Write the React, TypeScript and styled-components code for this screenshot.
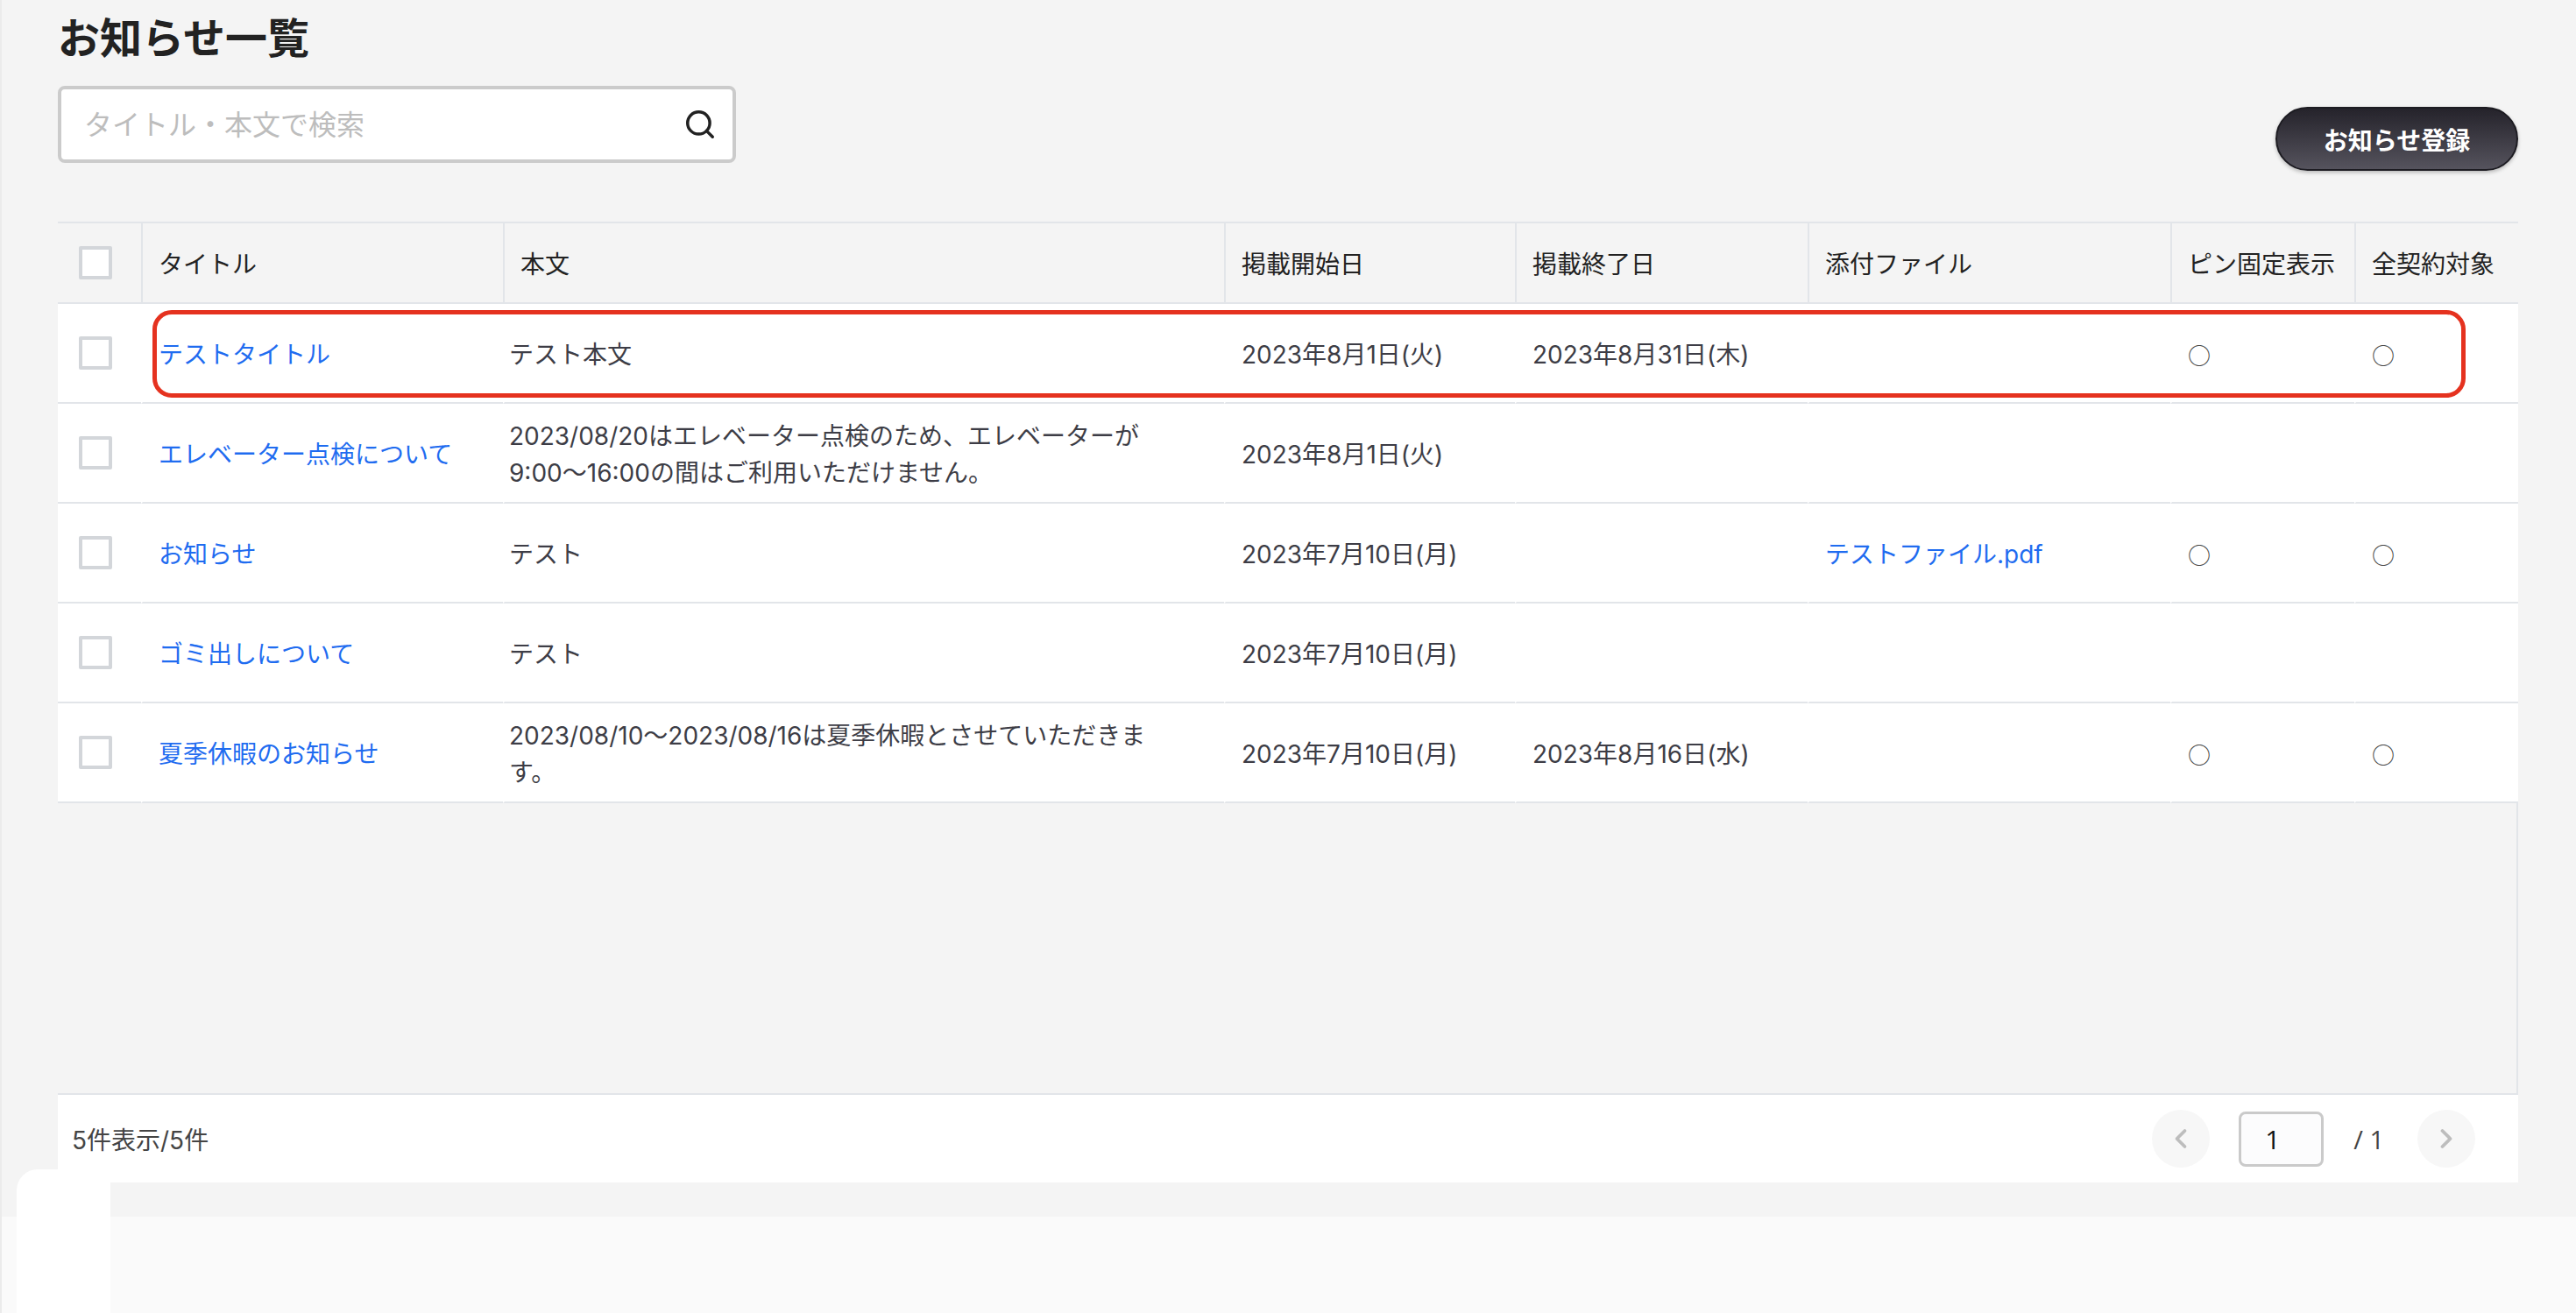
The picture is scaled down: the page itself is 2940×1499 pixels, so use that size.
import React from "react";
import styled, { createGlobalStyle } from "styled-components";
import { Search, ChevronLeft, ChevronRight } from "lucide-react";

const GlobalStyle = createGlobalStyle`
  html, body {
    margin: 0;
    padding: 0;
    background: #f4f4f4;
  }
  body {
    font-family: Inter, "Noto Sans CJK JP", sans-serif;
    color: #222;
  }
  * {
    box-sizing: border-box;
  }
`;

const StyledPage = styled.div`
  min-height: 100vh;
  display: flex;
  flex-direction: column;
  border-left: 2px solid #ebebeb;
`;

const StyledContent = styled.div`
  padding: 12px 66px 0 64px;
`;

const StyledTitle = styled.h1`
  margin: 0;
  font-size: 48px;
  line-height: 64px;
  font-weight: 700;
  color: #222;
`;

const StyledToolbar = styled.div`
  margin-top: 22px;
  display: flex;
  justify-content: space-between;
  align-items: flex-start;
`;

const StyledSearchBox = styled.div`
  width: 774px;
  height: 88px;
  background: #fff;
  border: 4px solid #cbcbcb;
  border-radius: 8px;
  display: flex;
  align-items: center;
  padding: 0 18px 0 24px;
`;

const StyledSearchInput = styled.input`
  flex: 1;
  border: none;
  outline: none;
  background: transparent;
  font-family: inherit;
  font-size: 32px;
  color: #222;

  &::placeholder {
    color: #bdbdbd;
  }
`;

const StyledRegisterButton = styled.button`
  margin-top: 24px;
  width: 277px;
  height: 73px;
  border-radius: 40px;
  border: 2px solid #1d1c22;
  background: linear-gradient(to bottom, #25232b, #55535d);
  box-shadow: 0 2px 4px rgba(0, 0, 0, 0.25);
  color: #fff;
  font-family: inherit;
  font-size: 28px;
  font-weight: 700;
`;

const StyledTableArea = styled.div`
  position: relative;
  margin-top: 58px;
  height: 997px;
  border-right: 2px solid #e2e5e9;
  border-bottom: 2px solid #e2e5e9;
`;

const StyledTable = styled.table`
  width: 100%;
  border-collapse: separate;
  border-spacing: 0;
  table-layout: fixed;
`;

const StyledHeadCell = styled.th`
  height: 94px;
  padding: 0 0 0 18px;
  text-align: left;
  font-size: 28px;
  font-weight: 400;
  color: #222;
  background: #f4f4f4;
  border-top: 2px solid #e2e5e9;
  border-bottom: 2px solid #e2e5e9;
  border-left: 2px solid #e2e5e9;

  &:first-child {
    border-left: none;
    padding: 0 0 0 24px;
  }
`;

const StyledCell = styled.td<{ $pad?: number }>`
  height: 114px;
  padding: 4px 18px 0 ${(p) => p.$pad ?? 18}px;
  background: #fff;
  font-size: 28px;
  line-height: 42px;
  color: #3d3d46;
  vertical-align: middle;
  border-bottom: 2px solid #e2e5e9;
  border-left: 2px solid #fff;
  white-space: pre-line;

  &:first-child {
    border-left: none;
    padding: 0 0 0 24px;
  }
`;

const StyledCheckbox = styled.span`
  display: block;
  width: 38px;
  height: 38px;
  background: #fff;
  border: 4px solid #d3d6da;
  border-radius: 2px;
`;

const StyledLink = styled.a`
  color: #1f6cf0;
  text-decoration: none;
`;

const StyledMark = styled.span`
  font-family: "Noto Sans CJK JP", sans-serif;
  font-size: 26px;
  color: #444;
`;

const StyledHighlight = styled.div`
  position: absolute;
  left: 108px;
  top: 101px;
  width: 2640px;
  height: 100px;
  border: 5px solid #e5321f;
  border-radius: 22px;
  pointer-events: none;
`;

const StyledFooter = styled.div`
  height: 100px;
  background: #fff;
  display: flex;
  align-items: center;
  justify-content: space-between;
  padding: 0 49px 0 16px;
`;

const StyledCount = styled.span`
  font-size: 28px;
  color: #444;
`;

const StyledPager = styled.div`
  display: flex;
  align-items: center;
`;

const StyledPageArrow = styled.button`
  width: 66px;
  height: 66px;
  border-radius: 50%;
  border: none;
  background: #f7f7f7;
  color: #bdbdbd;
  display: flex;
  align-items: center;
  justify-content: center;
  padding: 0;
`;

const StyledPageInput = styled.input`
  margin-left: 33px;
  width: 97px;
  height: 63px;
  border: 3px solid #cacaca;
  border-radius: 8px;
  background: #fcfcfd;
  padding: 0 0 0 27px;
  font-family: "Open Sans", sans-serif;
  font-size: 30px;
  color: #111;
  outline: none;
`;

const StyledPageTotal = styled.span`
  margin: 0 38px 0 34px;
  font-family: "Open Sans", sans-serif;
  font-size: 29px;
  color: #444;
`;

const StyledBottomBand = styled.div`
  margin-top: 39px;
  flex: 1;
  background: #fafafa;
`;

const StyledCorner = styled.div`
  position: absolute;
  left: 19px;
  top: 1335px;
  width: 107px;
  height: 164px;
  background: #fff;
  border-top-left-radius: 24px;
`;

type Notice = {
  title: string;
  body: string;
  start: string;
  end: string;
  file: string;
  pinned: boolean;
  all: boolean;
};

const notices: Notice[] = [
  {
    title: "テストタイトル",
    body: "テスト本文",
    start: "2023年8月1日(火)",
    end: "2023年8月31日(木)",
    file: "",
    pinned: true,
    all: true,
  },
  {
    title: "エレベーター点検について",
    body: "2023/08/20はエレベーター点検のため、エレベーターが\n9:00〜16:00の間はご利用いただけません。",
    start: "2023年8月1日(火)",
    end: "",
    file: "",
    pinned: false,
    all: false,
  },
  {
    title: "お知らせ",
    body: "テスト",
    start: "2023年7月10日(月)",
    end: "",
    file: "テストファイル.pdf",
    pinned: true,
    all: true,
  },
  {
    title: "ゴミ出しについて",
    body: "テスト",
    start: "2023年7月10日(月)",
    end: "",
    file: "",
    pinned: false,
    all: false,
  },
  {
    title: "夏季休暇のお知らせ",
    body: "2023/08/10〜2023/08/16は夏季休暇とさせていただきま\nす。",
    start: "2023年7月10日(月)",
    end: "2023年8月16日(水)",
    file: "",
    pinned: true,
    all: true,
  },
];

const columns = [95, 413, 823, 332, 334, 414, 210, 187];
const headers = ["タイトル", "本文", "掲載開始日", "掲載終了日", "添付ファイル", "ピン固定表示", "全契約対象"];

const App = () => {
  const [keyword, setKeyword] = React.useState("");

  return (
    <StyledPage>
      <GlobalStyle />
      <StyledContent>
        <StyledTitle>お知らせ一覧</StyledTitle>

        <StyledToolbar>
          <StyledSearchBox>
            <StyledSearchInput
              value={keyword}
              onChange={(e) => setKeyword(e.target.value)}
              placeholder="タイトル・本文で検索"
            />
            <Search size={38} strokeWidth={2.2} color="#222" />
          </StyledSearchBox>
          <StyledRegisterButton>お知らせ登録</StyledRegisterButton>
        </StyledToolbar>

        <StyledTableArea>
          <StyledTable>
            <colgroup>
              {columns.map((w, i) => (
                <col key={i} style={{ width: w }} />
              ))}
            </colgroup>
            <thead>
              <tr>
                <StyledHeadCell>
                  <StyledCheckbox />
                </StyledHeadCell>
                {headers.map((h) => (
                  <StyledHeadCell key={h}>{h}</StyledHeadCell>
                ))}
              </tr>
            </thead>
            <tbody>
              {notices.map((n) => (
                <tr key={n.title}>
                  <StyledCell>
                    <StyledCheckbox />
                  </StyledCell>
                  <StyledCell>
                    <StyledLink href="#">{n.title}</StyledLink>
                  </StyledCell>
                  <StyledCell $pad={5}>{n.body}</StyledCell>
                  <StyledCell>{n.start}</StyledCell>
                  <StyledCell>{n.end}</StyledCell>
                  <StyledCell>
                    {n.file && <StyledLink href="#">{n.file}</StyledLink>}
                  </StyledCell>
                  <StyledCell>{n.pinned && <StyledMark>○</StyledMark>}</StyledCell>
                  <StyledCell>{n.all && <StyledMark>○</StyledMark>}</StyledCell>
                </tr>
              ))}
            </tbody>
          </StyledTable>
          <StyledHighlight />
        </StyledTableArea>

        <StyledFooter>
          <StyledCount>5件表示/5件</StyledCount>
          <StyledPager>
            <StyledPageArrow>
              <ChevronLeft size={36} strokeWidth={2.5} />
            </StyledPageArrow>
            <StyledPageInput defaultValue="1" />
            <StyledPageTotal>/ 1</StyledPageTotal>
            <StyledPageArrow>
              <ChevronRight size={36} strokeWidth={2.5} />
            </StyledPageArrow>
          </StyledPager>
        </StyledFooter>
      </StyledContent>
      <StyledBottomBand />
      <StyledCorner />
    </StyledPage>
  );
};

export default App;
